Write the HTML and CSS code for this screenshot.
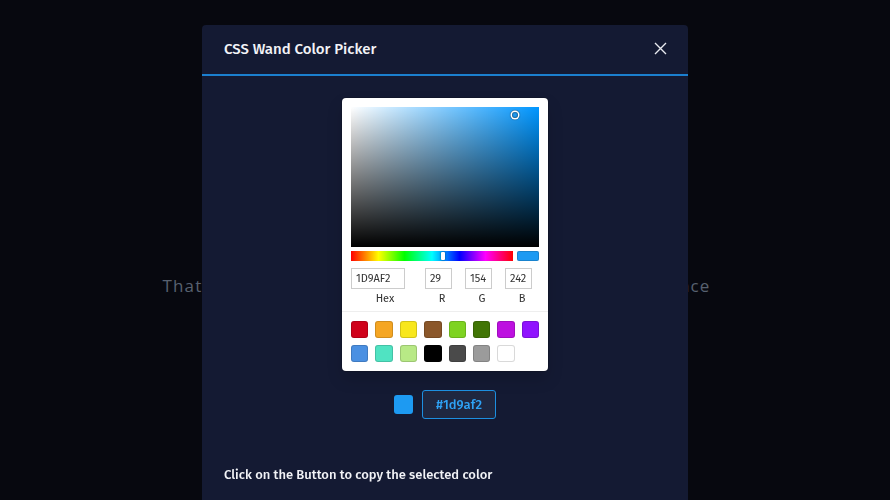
FILE: index.html
```html
<!DOCTYPE html>
<html>
<head>
<meta charset="utf-8">
<link rel="stylesheet" href="styles.css">
</head>
<body>
<main class="page">
  <p class="hero-text">That is all you need to pick a colour for your next experience</p>
</main>
<div class="overlay">
  <section class="modal">
    <header class="modal-header">
      <h2 class="modal-title">CSS Wand Color Picker</h2>
      <button class="close-btn" aria-label="Close">
        <svg width="13" height="13" viewBox="0 0 13 13"><path d="M1 1 L12 12 M12 1 L1 12" stroke="#e8eaf0" stroke-width="1.4" fill="none"/></svg>
      </button>
    </header>
    <div class="modal-body">
      <div class="picker">
        <div class="saturation">
          <div class="sat-white"></div>
          <div class="sat-black"></div>
          <div class="sat-pointer"></div>
        </div>
        <div class="controls">
          <div class="hue"><div class="hue-thumb"></div></div>
          <div class="preview"></div>
        </div>
        <div class="fields">
          <div class="field field-hex"><div class="input">1D9AF2</div><div class="label">Hex</div></div>
          <div class="field"><div class="input">29</div><div class="label">R</div></div>
          <div class="field"><div class="input">154</div><div class="label">G</div></div>
          <div class="field"><div class="input">242</div><div class="label">B</div></div>
        </div>
        <div class="swatches">
          <span class="sw" style="background:#D0021B"></span>
          <span class="sw" style="background:#F5A623"></span>
          <span class="sw" style="background:#F8E71C"></span>
          <span class="sw" style="background:#8B572A"></span>
          <span class="sw" style="background:#7ED321"></span>
          <span class="sw" style="background:#417505"></span>
          <span class="sw" style="background:#BD10E0"></span>
          <span class="sw" style="background:#9013FE"></span>
          <span class="sw" style="background:#4A90E2"></span>
          <span class="sw" style="background:#50E3C2"></span>
          <span class="sw" style="background:#B8E986"></span>
          <span class="sw" style="background:#000000"></span>
          <span class="sw" style="background:#4A4A4A"></span>
          <span class="sw" style="background:#9B9B9B"></span>
          <span class="sw" style="background:#FFFFFF"></span>
        </div>
      </div>
      <div class="result">
        <span class="result-swatch"></span>
        <button class="copy-btn">#1d9af2</button>
      </div>
      <p class="hint">Click on the Button to copy the selected color</p>
    </div>
  </section>
</div>
</body>
</html>
```
FILE: styles.css
```css
* { box-sizing: border-box; }
html, body { margin: 0; padding: 0; }
body {
  background: #07080f;
  font-family: "Fira Sans", Lato, "Open Sans", sans-serif;
  width: 890px;
  height: 500px;
  overflow: hidden;
}
.page {
  height: 500px;
  display: flex;
  align-items: center;
  justify-content: center;
  padding-right: 17px;
}
.hero-text {
  margin: 0 0 -70px 0;
  color: #58616f;
  font-family: "Open Sans", sans-serif;
  font-size: 17px;
  letter-spacing: 1.15px;
  white-space: nowrap;
}
.overlay {
  position: fixed;
  inset: 0;
  display: flex;
  justify-content: center;
  padding-top: 25px;
}
.modal {
  width: 486px;
  height: 520px;
  background: #141a33;
  border-radius: 4px;
  display: flex;
  flex-direction: column;
}
.modal-header {
  height: 51px;
  border-bottom: 2px solid #1b7fcf;
  display: flex;
  align-items: center;
  justify-content: space-between;
  padding: 0 21px 2px 22px;
}
.modal-title {
  margin: 0;
  color: #f2f3f7;
  font-size: 15px;
  font-weight: 500;
}
.close-btn {
  background: none;
  border: 0;
  padding: 0;
  width: 13px;
  height: 13px;
  display: flex;
}
.modal-body {
  display: flex;
  flex-direction: column;
  align-items: center;
  padding-top: 22px;
}
.picker {
  width: 206px;
  background: #fff;
  border-radius: 4px;
  padding: 9px 9px 9px 9px;
  box-shadow: 0 0 0 1px rgba(0,0,0,0.15), 0 8px 16px rgba(0,0,0,0.15);
}
.saturation {
  position: relative;
  height: 140px;
  background: #0096ff;
  overflow: hidden;
}
.sat-white {
  position: absolute;
  inset: 0;
  background: linear-gradient(to right, #fff, rgba(255,255,255,0));
}
.sat-black {
  position: absolute;
  inset: 0;
  background: linear-gradient(to top, #000, rgba(0,0,0,0));
}
.sat-pointer {
  position: absolute;
  left: 161px;
  top: 5px;
  width: 6px;
  height: 6px;
  border-radius: 50%;
  box-shadow: 0 0 0 1.5px #fff, inset 0 0 1px 1px rgba(0,0,0,0.3), 0 0 1px 2px rgba(0,0,0,0.4);
}
.controls {
  display: flex;
  margin-top: 4px;
  gap: 4px;
}
.hue {
  position: relative;
  flex: 1;
  height: 10px;
  background: linear-gradient(to right, #f00 0%, #ff0 17%, #0f0 33%, #0ff 50%, #00f 67%, #f0f 83%, #f00 100%);
}
.hue-thumb {
  position: absolute;
  left: 90px;
  top: 1px;
  width: 4px;
  height: 8px;
  background: #fff;
  border-radius: 1px;
  box-shadow: 0 0 2px rgba(0,0,0,0.6);
}
.preview {
  width: 22px;
  height: 10px;
  background: #1d9af2;
  border-radius: 2px;
  box-shadow: inset 0 0 0 1px rgba(0,0,0,0.15);
}
.fields {
  display: flex;
  margin-top: 7px;
}
.field {
  flex: 1;
  padding-left: 6px;
}
.field-hex {
  flex: 2;
  padding-left: 0;
}
.input {
  width: 80%;
  height: 21px;
  padding: 4px 0 0 5px;
  font-size: 11px;
  line-height: 13px;
  color: #333;
  box-shadow: inset 0 0 0 1px #ccc;
}
.label {
  text-align: center;
  font-size: 11px;
  line-height: 13px;
  color: #333;
  margin-top: 3px;
  height: 19px;
}
.swatches {
  margin: 0 -9px;
  border-top: 1px solid #eee;
  padding: 9px 9px 0 9px;
  display: grid;
  grid-template-columns: repeat(8, 1fr);
  column-gap: 7px;
  row-gap: 7px;
}
.sw {
  height: 17px;
  border-radius: 3px;
  box-shadow: inset 0 0 0 1px rgba(0,0,0,0.15);
}
.result {
  display: flex;
  align-items: center;
  gap: 9px;
  margin-top: 19px;
}
.result-swatch {
  width: 19px;
  height: 19px;
  border-radius: 3px;
  background: #1d9af2;
}
.copy-btn {
  width: 74px;
  height: 29px;
  background: #1f2740;
  border: 1px solid #1d8fe0;
  border-radius: 3px;
  color: #2ea2f5;
  font-family: "Fira Sans", Lato, "Open Sans", sans-serif;
  font-size: 13px;
  font-weight: 500;
  padding: 0;
}
.hint {
  align-self: flex-start;
  margin: 48px 0 0 22px;
  color: #f2f3f7;
  font-size: 13px;
  font-weight: 500;
}
```
